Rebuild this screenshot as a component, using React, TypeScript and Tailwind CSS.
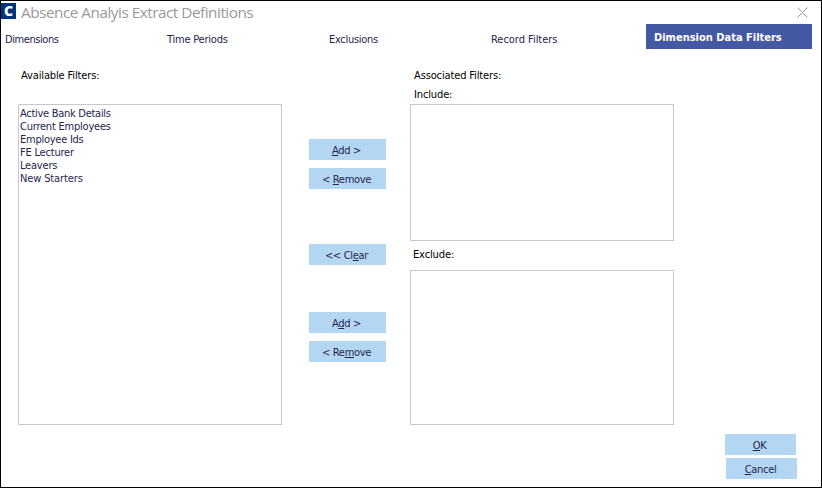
import React from 'react';

const tabs = [
  { id: 1, label: 'Dimensions', spacing: 'tracking-[-0.42px]' },
  { id: 2, label: 'Time Periods', spacing: 'tracking-[-0.22px]' },
  { id: 3, label: 'Exclusions', spacing: 'tracking-[-0.3px]' },
  { id: 4, label: 'Record Filters', spacing: 'tracking-[-0.03px]' },
];

const availableFilters = [
  { id: 1, name: 'Active Bank Details', spacing: 'tracking-[-0.28px]' },
  { id: 2, name: 'Current Employees', spacing: 'tracking-[-0.22px]' },
  { id: 3, name: 'Employee Ids', spacing: 'tracking-[-0.25px]' },
  { id: 4, name: 'FE Lecturer', spacing: 'tracking-[-0.2px]' },
  { id: 5, name: 'Leavers', spacing: 'tracking-[-0.2px]' },
  { id: 6, name: 'New Starters', spacing: 'tracking-[-0.13px]' },
];

// The access key is the underlined letter of a label
function ActionButton({
  before = '',
  accessKey,
  after = '',
  className = 'w-[77px]',
}: {
  before?: string;
  accessKey: string;
  after?: string;
  className?: string;
}) {
  return (
    <button
      type="button"
      className={`block h-[21px] overflow-hidden bg-[#b3d6f2] pr-[2px] text-center leading-[23px] tracking-[-0.3px] whitespace-nowrap text-[#25254f] ${className}`}
    >
      {before}
      <span className="underline decoration-1 underline-offset-1">{accessKey}</span>
      {after}
    </button>
  );
}

export default function App() {
  return (
    <div className="flex h-[488px] w-[822px] flex-col border border-black bg-white font-['DejaVu_Sans_Condensed','DejaVu_Sans',sans-serif] text-[11px] text-[#25254f]">
      {/* Title bar */}
      <div className="flex h-[23px] shrink-0 items-start justify-between pr-[13px]">
        <div className="flex">
          <span className="mt-[2px] h-4 w-[15px] bg-[#003579] text-center font-['Open_Sans',sans-serif] text-[14px] leading-4 font-extrabold text-white">
            C
          </span>
          <h1 className="ml-[5px] font-['Open_Sans',sans-serif] text-[15.3px] leading-[22px] tracking-[-0.48px] whitespace-nowrap text-[#999999]">
            Absence Analyis Extract Definitions
          </h1>
        </div>
        <button type="button" aria-label="Close" className="mt-[6px]">
          <svg className="h-[11px] w-[11px]" viewBox="0 0 11 11">
            <path d="M.5.5l10 10M10.500.5l-10 10" stroke="#999" strokeWidth="1" />
          </svg>
        </button>
      </div>

      {/* Tabs */}
      <nav className="flex h-[25px] shrink-0 pl-1">
        {tabs.map((tab) => (
          <a key={tab.id} className={`w-[162px] pt-[6px] leading-5 whitespace-nowrap ${tab.spacing}`}>
            {tab.label}
          </a>
        ))}
        <a className="-ml-[7px] w-[166px] bg-[#4558a4] pl-2 leading-[27px] font-bold whitespace-nowrap text-white">
          Dimension Data Filters
        </a>
      </nav>

      {/* Filter lists */}
      <main className="flex h-[376px] shrink-0 pl-[17px]">
        <section className="w-[264px]">
          <h2 className="h-[55px] pt-[17px] pl-[3px] leading-5 tracking-[-0.13px] text-black">Available Filters:</h2>
          <ul className="h-[321px] border border-[#c8c8c8] pt-[2px] pl-px">
            {availableFilters.map((filter) => (
              <li key={filter.id} className={`h-[13px] leading-[13px] whitespace-nowrap ${filter.spacing}`}>
                {filter.name}
              </li>
            ))}
          </ul>
        </section>

        <section className="ml-[27px] w-[77px] pt-[90px]">
          <ActionButton accessKey="A" after="dd >" />
          <ActionButton before="< " accessKey="R" after="emove" className="mt-2 w-[77px]" />
          <ActionButton before="<< Cl" accessKey="e" after="ar" className="mt-[55px] w-[77px]" />
          <ActionButton before="A" accessKey="d" after="d >" className="mt-[47px] w-[77px]" />
          <ActionButton before="< Re" accessKey="m" after="ove" className="mt-2 w-[77px]" />
        </section>

        <section className="ml-6 w-[264px] tracking-[-0.13px] text-black">
          <h2 className="h-9 pt-[17px] pl-1 leading-5">Associated Filters:</h2>
          <h3 className="h-[19px] pl-1 leading-5">Include:</h3>
          <div className="h-[137px] border border-[#c8c8c8]" />
          <h3 className="h-[29px] pl-[3px] leading-[28px]">Exclude:</h3>
          <div className="h-[155px] border border-[#c8c8c8]" />
        </section>
      </main>

      <footer className="flex flex-col items-end gap-[3px] pt-[9px] pr-6">
        <ActionButton accessKey="O" after="K" className="mr-px w-[71px]" />
        <ActionButton accessKey="C" after="ancel" className="w-[71px]" />
      </footer>
    </div>
  );
}
